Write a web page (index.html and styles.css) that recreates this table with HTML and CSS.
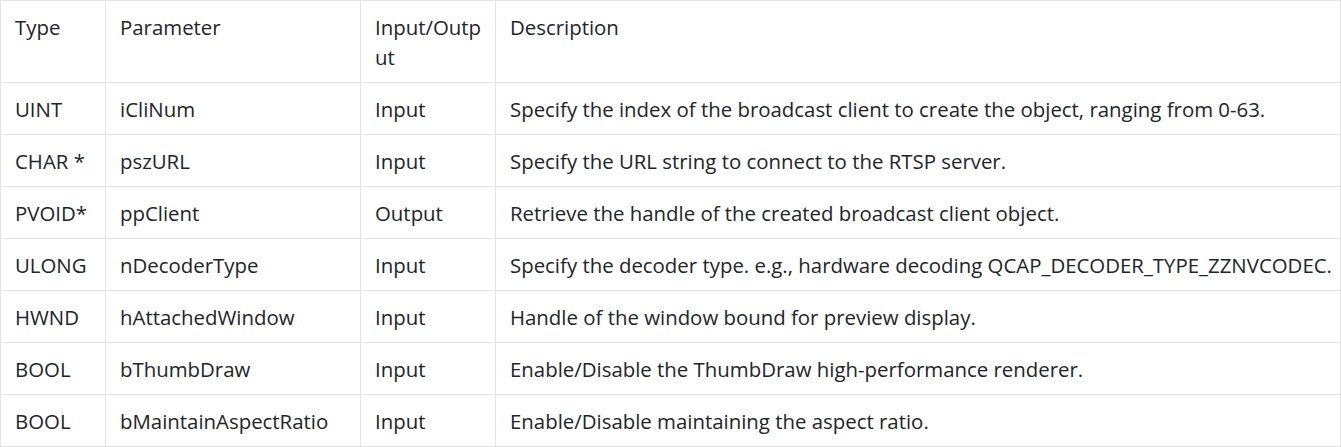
FILE: index.html
```html
<!DOCTYPE HTML>
<html>
    <head>
        <meta charset="UTF-8">
        <title>Parameters</title>
        <link rel="stylesheet" href="styles.css">
    </head>
    <body>
        <table class="params">
            <colgroup>
                <col class="c-type">
                <col class="c-param">
                <col class="c-io">
                <col class="c-desc">
            </colgroup>
            <thead>
                <tr>
                    <th>Type</th>
                    <th>Parameter</th>
                    <th class="io">Input/Output</th>
                    <th>Description</th>
                </tr>
            </thead>
            <tbody>
                <tr>
                    <td>UINT</td>
                    <td>iCliNum</td>
                    <td class="io">Input</td>
                    <td class="desc">Specify the index of the broadcast client to create the object, ranging from 0-63.</td>
                </tr>
                <tr>
                    <td>CHAR *</td>
                    <td>pszURL</td>
                    <td class="io">Input</td>
                    <td class="desc">Specify the URL string to connect to the RTSP server.</td>
                </tr>
                <tr>
                    <td>PVOID*</td>
                    <td>ppClient</td>
                    <td class="io">Output</td>
                    <td class="desc">Retrieve the handle of the created broadcast client object.</td>
                </tr>
                <tr>
                    <td>ULONG</td>
                    <td>nDecoderType</td>
                    <td class="io">Input</td>
                    <td class="desc">Specify the decoder type. e.g., hardware decoding QCAP_DECODER_TYPE_ZZNVCODEC.</td>
                </tr>
                <tr>
                    <td>HWND</td>
                    <td>hAttachedWindow</td>
                    <td class="io">Input</td>
                    <td class="desc">Handle of the window bound for preview display.</td>
                </tr>
                <tr>
                    <td>BOOL</td>
                    <td>bThumbDraw</td>
                    <td class="io">Input</td>
                    <td class="desc">Enable/Disable the ThumbDraw high-performance renderer.</td>
                </tr>
                <tr>
                    <td>BOOL</td>
                    <td>bMaintainAspectRatio</td>
                    <td class="io">Input</td>
                    <td class="desc">Enable/Disable maintaining the aspect ratio.</td>
                </tr>
            </tbody>
        </table>
    </body>
</html>
```

FILE: styles.css
```css
body{
    margin: 0;
    background: #fff;
    font-family: "Open Sans", "Noto Sans", sans-serif;
    color: #212529;
}
.params{
    width: 1341px;
    table-layout: fixed;
    border-collapse: collapse;
    font-size: 20.4px;
    line-height: 30px;
}
.c-type{
    width: 105px;
}
.c-param{
    width: 255px;
}
.c-io{
    width: 135px;
}
.params th, .params td{
    border: 1px solid #e3e3e3;
    padding: 10.5px 15px 10.5px 14px;
    text-align: left;
    vertical-align: top;
    font-weight: normal;
}
.params .io{
    padding-right: 10px;
    word-break: break-all;
}
.params .desc{
    padding-right: 4px;
    white-space: nowrap;
}
```
